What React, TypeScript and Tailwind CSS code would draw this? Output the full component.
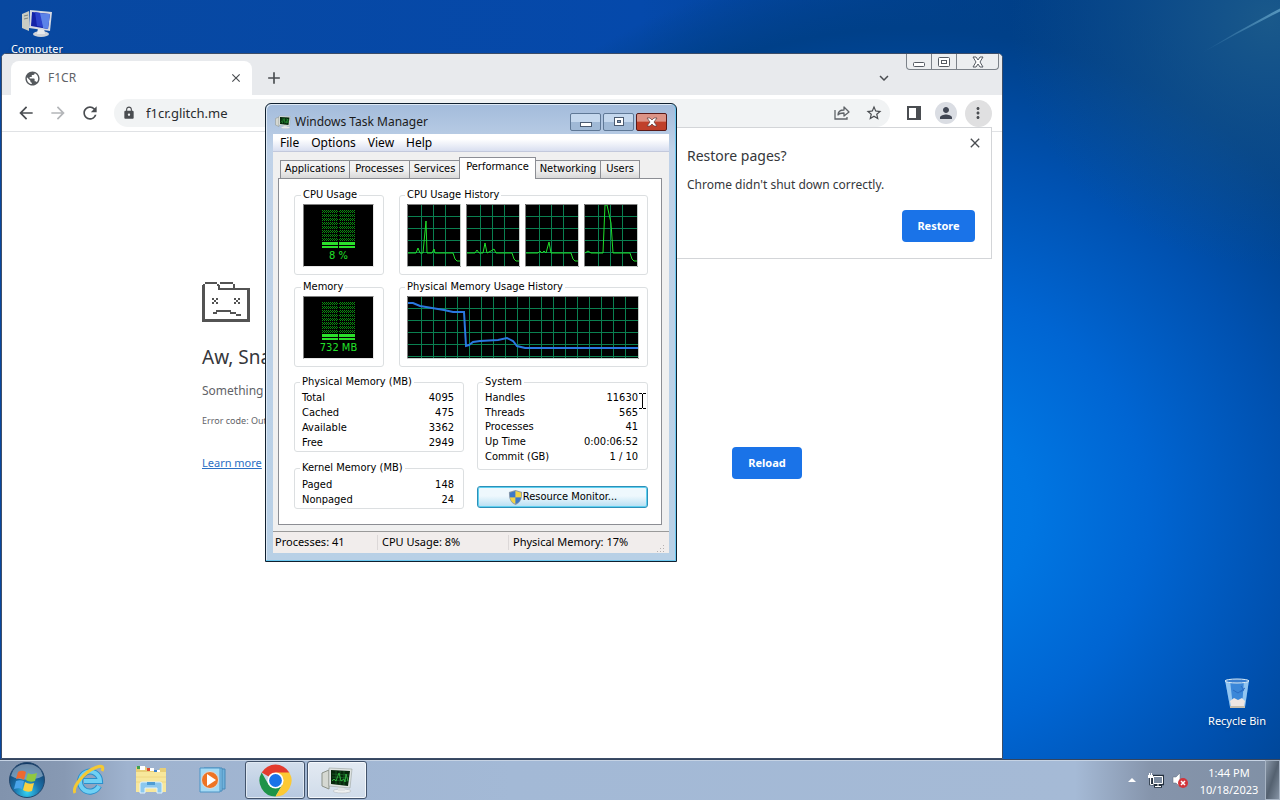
import React from "react";
import {
	MdAdd,
	MdArrowBack,
	MdArrowForward,
	MdClose,
	MdExpandMore,
	MdLock,
	MdMoreVert,
	MdPerson,
	MdPublic,
	MdRefresh,
	MdStarBorder,
} from "react-icons/md";

interface IRow {
	label: string;
	value: string;
}

const physicalMemory: IRow[] = [
	{ label: "Total", value: "4095" },
	{ label: "Cached", value: "475" },
	{ label: "Available", value: "3362" },
	{ label: "Free", value: "2949" },
];

const kernelMemory: IRow[] = [
	{ label: "Paged", value: "148" },
	{ label: "Nonpaged", value: "24" },
];

const system: IRow[] = [
	{ label: "Handles", value: "11630" },
	{ label: "Threads", value: "565" },
	{ label: "Processes", value: "41" },
	{ label: "Up Time", value: "0:00:06:52" },
	{ label: "Commit (GB)", value: "1 / 10" },
];

const tabs = [
	{ name: "Applications", width: "w-[70px]" },
	{ name: "Processes", width: "w-[61px]" },
	{ name: "Services", width: "w-[51px]" },
	{ name: "Performance", width: "w-[77px]" },
	{ name: "Networking", width: "w-[66px]" },
	{ name: "Users", width: "w-[40px]" },
];

// one polyline per core
const cores = [
	"1,49 9,49 11,44 13,49 16,49 19,17 20,49 25,49 27,45 28,49 46,49 48,55 50,57 53,57",
	"1,49 9,49 11,46 13,49 17,49 19,39 21,49 25,47 28,45 30,49 46,49 48,55 50,57 53,57",
	"1,49 13,49 15,47 17,49 19,47 21,49 24,38 26,49 46,49 48,55 50,57 53,57",
	"1,49 4,47 7,49 19,49 21,1 23,1 27,19 29,49 46,49 48,55 50,57 53,57",
];

const memoryLine =
	"1,7 6,7 13,10 25,12 37,14 46,16 57,16 59,50 62,49 66,46 73,45 91,44 100,42 106,45 110,50 118,52 231,52";

/* ---------- desktop ---------- */

const Wallpaper = () => (
	<svg
		aria-hidden="true"
		className="absolute inset-0 h-full w-full"
		viewBox="0 0 1280 800"
		preserveAspectRatio="none">
		<defs>
			<radialGradient id="glow" gradientUnits="userSpaceOnUse" cx="910" cy="540" r="600">
				<stop offset="0" stopColor="#007ee8" />
				<stop offset="0.2" stopColor="#0076e2" />
				<stop offset="0.4" stopColor="#0065d2" />
				<stop offset="0.63" stopColor="#0051b0" />
				<stop offset="0.85" stopColor="#004089" />
				<stop offset="0.97" stopColor="#003f86" stopOpacity="0" />
			</radialGradient>
			<radialGradient id="haze" gradientUnits="userSpaceOnUse" cx="1270" cy="20" r="260">
				<stop offset="0" stopColor="#2b6a8c" stopOpacity="0.6" />
				<stop offset="1" stopColor="#1d5a8c" stopOpacity="0" />
			</radialGradient>
			<linearGradient id="top" x1="0" x2="1" y1="0" y2="0">
				<stop offset="0" stopColor="#0848a0" />
				<stop offset="0.5" stopColor="#0549ab" />
				<stop offset="0.8" stopColor="#003f88" />
				<stop offset="1" stopColor="#003f88" />
			</linearGradient>
			<linearGradient id="ray" x1="0" x2="1" y1="1" y2="0">
				<stop offset="0" stopColor="#7fc0e0" stopOpacity="0" />
				<stop offset="1" stopColor="#7fc0e0" stopOpacity="0.6" />
			</linearGradient>
		</defs>
		<rect width="1280" height="800" fill="url(#top)" />
		<rect width="1280" height="800" fill="url(#glow)" />
		<rect width="1280" height="800" fill="url(#haze)" />
		<path d="M1200 57Q1240 31 1280 9V12Q1240 33 1200 57Z" fill="url(#ray)" />
	</svg>
);

const ComputerIcon = () => (
	<svg className="h-8 w-8" viewBox="0 0 32 32">
		<path d="M1 7l7-3v20l-7-3z" fill="#c9cdc4" />
		<path d="M3 9l4-1M3 12l4-1" stroke="#7e857e" />
		<ellipse cx="20" cy="27" rx="8" ry="3" fill="#cfd3d8" />
		<path d="M17 21h6l1 6h-8z" fill="#e8eaec" />
		<path d="M9 3l22 2-2 19-21-3z" fill="#d5d9e2" />
		<path d="M11 5l18 2-2 15-17-3z" fill="#1322a8" />
		<path d="M18 6l11 1-2 15-5-1z" fill="#5c83e8" />
		<path d="M14 5l5 1 3 14-6-1z" fill="#2c42cc" />
	</svg>
);

const RecycleBinIcon = () => (
	<svg className="h-8 w-8" viewBox="0 0 32 32">
		<path d="M4 3h24l-4 27H9z" fill="#4f9ae6" fillOpacity="0.75" />
		<path d="M4 3l5 27h3L9 3zM28 3l-4 27h-3l2-27z" fill="#a9d4f6" fillOpacity="0.8" />
		<path d="M9 24l4-3 4 2 4-2 3 3-1 5H10z" fill="#eee6e2" />
		<path d="M12 13l5 3 7-5M20 9l3 4-4 2" fill="none" stroke="#2a6cc4" />
		<ellipse cx="16" cy="4" rx="12" ry="2" fill="#3a7fd0" stroke="#dcecf4" />
		<path d="M9 30h15" stroke="#c8bfae" strokeWidth="2" />
	</svg>
);

/* ---------- browser ---------- */

const SadFolder = () => (
	<svg className="h-10 w-12" viewBox="0 0 48 40" fill="#535353" shapeRendering="crispEdges">
		<path d="M0 3h3v37H0zM3 0h12v2H3zM1 2h2v2H1zM15 2h2v2h-2zM18 0h13v2H18zM16 3h2v5h-2zM31 2h2v4h-2zM16 6h32v2H16zM45 6h3v34h-3zM0 37h48v3H0z" />
		<path d="M10 16h2v2h-2zM14 16h2v2h-2zM12 18h2v2h-2zM10 20h2v2h-2zM14 20h2v2h-2zM32 16h2v2h-2zM36 16h2v2h-2zM34 18h2v2h-2zM32 20h2v2h-2zM36 20h2v2h-2z" />
		<path d="M11 30h4v2h-4zM14 28h15v2H14zM28 30h6v2h-6zM34 32h5v2h-5z" />
	</svg>
);

const ShareIcon = () => (
	<svg className="h-4 w-4" viewBox="0 0 16 16" fill="none" stroke="#5f6368" strokeWidth="1.3">
		<path d="M1 5v9h12v-2" />
		<path d="M4 10c0-3 2-5 6-5V2l5 5-5 4V8C7 8 5 8 4 10z" strokeLinejoin="round" />
	</svg>
);

const BrowserWindow: React.FC = () => (
	<section
		aria-label="F1CR - Google Chrome"
		className="absolute top-[53px] right-[277px] bottom-0 left-px flex flex-col overflow-hidden rounded-t-[5px] border border-[#3c4d68] bg-white">
		<div className="relative flex h-[41px] shrink-0 items-end bg-[#e8eaed] pl-[9px]">
			<div className="flex h-[34px] w-[241px] items-center rounded-t-lg bg-white pr-[9px] pl-[13px]">
				<MdPublic className="size-[17px] text-[#55595d]" />
				<span className="ml-[7px] flex-1 text-xs text-[#5f6368]">F1CR</span>
				<button aria-label="Close tab" className="text-[#4a4d51]">
					<MdClose className="size-[14px]" />
				</button>
			</div>
			<button aria-label="New tab" className="flex h-[34px] w-11 items-center justify-center text-[#4a4d51]">
				<MdAdd className="size-5" />
			</button>
			<button
				aria-label="Search tabs"
				className="mr-[109px] ml-auto flex h-[34px] items-center text-[#4a4d51]">
				<MdExpandMore className="size-[18px]" />
			</button>
			<div className="absolute top-0 right-[3px] flex h-4 overflow-hidden rounded-b border border-t-0 border-[#7c8289] bg-[#eceef0]">
				<button aria-label="Minimize" className="flex w-[25px] items-center justify-center border-r border-[#7c8289]">
					<svg className="h-3 w-3" viewBox="0 0 12 12">
						<rect x="0.5" y="6.5" width="11" height="4" rx="1" fill="#fff" stroke="#555b62" />
					</svg>
				</button>
				<button aria-label="Maximize" className="flex w-[25px] items-center justify-center border-r border-[#7c8289]">
					<svg className="h-3 w-3" viewBox="0 0 12 12" fill="#fff" stroke="#555b62">
						<rect x="0.5" y="1.5" width="11" height="9" rx="1" />
						<rect x="3.5" y="4.5" width="5" height="3" />
					</svg>
				</button>
				<button aria-label="Close" className="flex w-[41px] items-center justify-center">
					<svg className="h-3 w-3" viewBox="0 0 12 12">
						<path d="M1 1h3l2 3 2-3h3L8 6l3 5H8L6 8l-2 3H1l3-5z" fill="#fff" stroke="#555b62" />
					</svg>
				</button>
			</div>
		</div>

		<div className="flex h-[37px] shrink-0 items-center border-b border-[#e0e2e5] px-2 text-[#4a4d51]">
			<button aria-label="Back" className="flex w-8 justify-center">
				<MdArrowBack className="size-5" />
			</button>
			<button aria-label="Forward" className="flex w-8 justify-center text-[#b4b6b9]">
				<MdArrowForward className="size-5" />
			</button>
			<button aria-label="Reload page" className="flex w-8 justify-center">
				<MdRefresh className="size-5" />
			</button>
			<div className="mx-2 flex h-7 flex-1 items-center rounded-full bg-[#f1f3f4] pl-2">
				<MdLock className="size-[14px] shrink-0" />
				<input
					aria-label="Address"
					defaultValue="f1cr.glitch.me"
					className="ml-[10px] min-w-0 flex-1 bg-transparent pt-[2px] text-[13px] text-[#2a2c2f] outline-none"
				/>
				<button aria-label="Share" className="flex w-8 justify-center">
					<ShareIcon />
				</button>
				<button aria-label="Bookmark this tab" className="flex w-8 justify-center">
					<MdStarBorder className="size-[18px]" />
				</button>
			</div>
			<button aria-label="Side panel" className="flex w-8 justify-center">
				<svg className="h-[14px] w-[14px]" viewBox="0 0 14 14">
					<path d="M0 0h14v14H0zM2 2v10h7V2z" fill="#4a4d51" fillRule="evenodd" />
				</svg>
			</button>
			<button aria-label="Profile" className="flex w-8 justify-center">
				<span className="flex size-[22px] items-center justify-center rounded-full bg-[#dadde3]">
					<MdPerson className="size-[18px] text-[#414754]" />
				</span>
			</button>
			<button aria-label="Menu" className="flex w-8 justify-center">
				<span className="flex size-[27px] shrink-0 items-center justify-center rounded-full bg-[#e0e0e1]">
					<MdMoreVert className="size-[18px]" />
				</span>
			</button>
		</div>

		<main className="mx-auto w-full max-w-[600px] pt-[150px]">
			<SadFolder />
			<h1 className="mt-[23px] text-[19px] leading-6 text-[#35373b]">Aw, Snap!</h1>
			<p className="mt-3 text-xs leading-5 text-[#5f6368]">
				Something went wrong while displaying this webpage.
			</p>
			<p className="mt-3 text-[9px] leading-4 text-[#5f6368]">Error code: Out of Memory</p>
			<div className="mt-[18px] flex items-center justify-between">
				<a href="#learn-more" className="text-[11px] text-[#2b6fc4] underline">
					Learn more
				</a>
				<button className="h-8 w-[70px] rounded bg-[#1a73e8] text-[11px] font-bold text-white">
					Reload
				</button>
			</div>
		</main>

		<div
			role="dialog"
			aria-label="Restore pages?"
			className="absolute top-[73px] right-[10px] flex h-[132px] w-[322px] flex-col border border-[#d3d5d8] bg-white px-4 pt-[18px] pb-4 text-[#35373b]">
			<button aria-label="Dismiss" className="absolute top-[7px] right-2 text-[#4a4d51]">
				<MdClose className="size-4" />
			</button>
			<h2 className="text-sm leading-5">Restore pages?</h2>
			<p className="mt-[9px] text-xs leading-5">Chrome didn't shut down correctly.</p>
			<button className="mt-auto h-8 w-[73px] self-end rounded bg-[#1a73e8] text-[11px] font-bold text-white">
				Restore
			</button>
		</div>
	</section>
);

/* ---------- task manager ---------- */

const TaskManagerIcon: React.FC<{ className: string }> = ({ className }) => (
	<svg className={className} viewBox="0 0 32 28">
		<path d="M1 7l7-3v19l-7-3z" fill="#d5d8d2" stroke="#8b9188" />
		<ellipse cx="21" cy="25" rx="9" ry="2" fill="#eef0f0" stroke="#aab0b4" strokeWidth="0.5" />
		<path d="M17 20h6l1 5h-7z" fill="#dfe2e4" />
		<path d="M8 2l23 1-2 19-21-2z" fill="#dfe4e2" stroke="#8e9693" strokeWidth="0.5" />
		<path d="M10 4l19 1-2 15-17-2z" fill="#06260b" />
		<path d="M11 8l17 1M11 11l17 1M11 14l16 1M15 5v13M19 5v14M23 5v14" stroke="#1a6a28" strokeWidth="0.7" />
		<path d="M11 15l2-2 2 2 3-8 2 8 3-2 1 3 1-8 2 7" fill="none" stroke="#35b844" strokeWidth="0.9" />
	</svg>
);

const ShieldIcon = () => (
	<svg className="h-[15px] w-[15px] shrink-0" viewBox="0 0 16 16">
		<path d="M8 0l7 2c0 7-1 11-7 14C2 13 1 9 1 2z" fill="#8c9aa8" />
		<path d="M8 1v7H2V3z" fill="#3c78c8" />
		<path d="M8 1l6 2v5H8z" fill="#f2d444" />
		<path d="M2 8h6v7C4 13 3 11 2 8z" fill="#f2d444" />
		<path d="M14 8H8v7c4-2 5-4 6-7z" fill="#3c78c8" />
	</svg>
);

interface IGroup {
	title: string;
	className: string;
	children: React.ReactNode;
}

const Group: React.FC<IGroup> = ({ title, className, children }) => (
	<fieldset className={`min-w-0 rounded-[3px] border border-[#dcdfe1] ${className}`}>
		<legend className="-ml-[2px] px-[2px] leading-[14px] whitespace-nowrap">{title}</legend>
		{children}
	</fieldset>
);

const Meter: React.FC<{ id: string; value: string }> = ({ id, value }) => (
	<div className="flex h-[63px] w-[71px] flex-col items-center border border-[#e6e6e6] border-t-[#808080] border-l-[#808080] bg-black pt-[5px] text-[#22e02a]">
		<svg className="h-[38px] w-[34px]" viewBox="0 0 34 38" shapeRendering="crispEdges">
			<defs>
				<pattern id={id} width="2" height="4" patternUnits="userSpaceOnUse">
					<path d="M0 0h1v1H0zM1 1h1v1H1zM0 2h1v1H0z" fill="#0a8a10" />
				</pattern>
			</defs>
			<path d="M0 0h16v31H0zM17 0h16v31H17z" fill={`url(#${id})`} />
			<path d="M0 32h16v3H0zM17 32h16v3H17zM0 36h16v2H0zM17 36h16v2H17z" fill="#2be02b" />
		</svg>
		<span className="mt-[1px] leading-[14px]">{value}</span>
	</div>
);

interface IGraph {
	width: number;
	points: string;
	memory?: boolean;
}

const Graph: React.FC<IGraph> = ({ width, points, memory }) => {
	const columns: number[] = [];
	for (let x = 14; x < width - 4; x += 12) columns.push(x);

	return (
		<svg
			className={memory ? "h-[63px] w-[232px]" : "h-[63px] w-[54px]"}
			viewBox={`0 0 ${width} 63`}>
			<rect width={width} height="63" fill="#000" />
			<g stroke="#0a8050" shapeRendering="crispEdges">
				{columns.map((x) => (
					<path key={x} d={`M${x + 0.5} 0V62`} />
				))}
				<path d={`M0 12.5H${width}M0 24.5H${width}M0 36.5H${width}M0 48.5H${width}`} />
				{memory && <path d={`M0 60.5H${width}`} />}
			</g>
			<polyline
				points={points}
				fill="none"
				stroke={memory ? "#2a78e0" : "#1fe02a"}
				strokeWidth={memory ? 2 : 1}
			/>
			<path d={`M0.5 63V0.5H${width}`} fill="none" stroke="#808080" />
			<path d={`M0 62.5H${width - 0.5}V0`} fill="none" stroke="#c4ccc8" />
		</svg>
	);
};

const Stats: React.FC<{ rows: IRow[]; className: string }> = ({ rows, className }) => (
	<table className={`w-full border-collapse leading-[14px] ${className}`}>
		<tbody>
			{rows.map((row) => (
				<tr key={row.label}>
					<th scope="row" className="p-0 text-left font-normal">
						{row.label}
					</th>
					<td className="p-0 text-right">{row.value}</td>
				</tr>
			))}
		</tbody>
	</table>
);

const TaskManager: React.FC = () => (
	<section
		aria-label="Windows Task Manager"
		className="absolute top-[103px] left-[265px] flex w-[412px] flex-col rounded-t-[6px] border border-[#10202f] bg-linear-to-b from-[#a3bbdb] via-[#c0d2e8] via-10% to-[#b8d0e6] px-[7px] pb-2 text-xs text-black shadow-[inset_-1px_0_0_#6cc8f0,inset_0_-1px_0_#6cc8f0,inset_1px_1px_0_#dfeaf6]">
		<header className="flex h-[30px] items-center pt-[6px] pr-[2px] pl-[2px]">
			<TaskManagerIcon className="h-[14px] w-4" />
			<h2 className="ml-1 flex-1 text-[#1a1a1a]">Windows Task Manager</h2>
			<div className="flex gap-[2px]">
				<button
					aria-label="Minimize"
					className="flex h-[18px] w-[31px] items-center justify-center rounded-[2px] border border-[#5f7896] bg-linear-to-b from-[#c5d8ee] from-50% to-[#a0b9d6] to-50%">
					<svg className="h-3 w-3" viewBox="0 0 12 12">
						<rect x="0.5" y="6.5" width="11" height="4" fill="#fff" stroke="#4a5a70" />
					</svg>
				</button>
				<button
					aria-label="Maximize"
					className="flex h-[18px] w-[31px] items-center justify-center rounded-[2px] border border-[#5f7896] bg-linear-to-b from-[#c5d8ee] from-50% to-[#a0b9d6] to-50%">
					<svg className="h-3 w-3" viewBox="0 0 12 12" fill="#fff" stroke="#4a5a70">
						<rect x="1.5" y="1.5" width="9" height="8" />
						<rect x="4.5" y="4.5" width="3" height="2" fill="#8aa4c4" />
					</svg>
				</button>
				<button
					aria-label="Close"
					className="flex h-[18px] w-[31px] items-center justify-center rounded-[2px] border border-[#5a1a18] bg-linear-to-b from-[#dd9487] from-45% to-[#c0402a] to-50%">
					<svg className="h-3 w-3" viewBox="0 0 12 12">
						<path d="M1 2h3l2 2 2-2h3L8 6l3 4H8L6 8l-2 2H1l3-4z" fill="#fff" stroke="#5c3a3a" strokeWidth="0.7" />
					</svg>
				</button>
			</div>
		</header>

		<div className="flex flex-col bg-[#f0f0f0]">
			<nav className="flex h-[18px] items-center gap-3 border-b border-[#c3c9dc] bg-linear-to-b from-white from-30% to-[#d9dff0] px-[7px]">
				<button>File</button>
				<button>Options</button>
				<button>View</button>
				<button>Help</button>
			</nav>

			<div className="pt-[5px] pr-[7px] pb-[6px] pl-[5px] font-['DejaVu_Sans_Condensed','Noto_Sans',sans-serif] text-[11px]">
				<div role="tablist" className="flex h-[21px] items-end pl-[2px]">
					{tabs.map(({ name, width }) =>
						name === "Performance" ? (
							<button
								key={name}
								role="tab"
								aria-selected="true"
								className={`relative -mb-px h-[22px] ${width} -mr-px border border-b-0 border-[#8c8e94] bg-white pb-[2px]`}>
								{name}
							</button>
						) : (
							<button
								key={name}
								role="tab"
								aria-selected="false"
								className={`h-[18px] ${width} -mr-px border border-b-0 border-[#8c8e94] bg-linear-to-b from-[#f2f2f2] from-50% to-[#d8d8d8]`}>
								{name}
							</button>
						)
					)}
				</div>

				<div
					role="tabpanel"
					className="flex h-[347px] flex-col border border-[#8c8e94] bg-white pt-[9px] pr-[13px] pl-[15px]">
					<div className="flex gap-[15px]">
						<Group title="CPU Usage" className="h-[87px] w-[90px] px-2 pt-[2px]">
							<Meter id="cpu-dots" value="8 %" />
						</Group>
						<Group title="CPU Usage History" className="h-[87px] flex-1 px-[7px] pt-[2px]">
							<div className="flex gap-[5px]">
								{cores.map((points) => (
									<Graph key={points} width={54} points={points} />
								))}
							</div>
						</Group>
					</div>
					<div className="mt-[5px] flex gap-[15px]">
						<Group title="Memory" className="h-[87px] w-[90px] px-2 pt-[2px]">
							<Meter id="memory-dots" value="732 MB" />
						</Group>
						<Group title="Physical Memory Usage History" className="h-[87px] flex-1 px-[7px] pt-[2px]">
							<Graph width={232} points={memoryLine} memory />
						</Group>
					</div>
					<div className="mt-2 flex gap-[13px]">
						<div className="flex w-[170px] flex-col gap-[9px]">
							<Group title="Physical Memory (MB)" className="h-[77px] pt-[2px] pr-[9px] pl-[7px]">
								<Stats rows={physicalMemory} className="h-[59px]" />
							</Group>
							<Group title="Kernel Memory (MB)" className="h-[48px] pt-[2px] pr-[9px] pl-[7px]">
								<Stats rows={kernelMemory} className="h-[30px]" />
							</Group>
						</div>
						<div className="flex flex-1 flex-col gap-[16px]">
							<Group title="System" className="h-[95px] pt-[2px] pr-[9px] pl-[7px]">
								<Stats rows={system} className="h-[73px]" />
							</Group>
							<button className="flex h-[22px] items-center justify-center rounded-[3px] border border-[#2c8fb8] bg-linear-to-b from-[#eef8fd] from-45% to-[#b5def2] shadow-[inset_0_0_0_1px_#5fd0f0]">
								<ShieldIcon />
								Resource Monitor...
							</button>
						</div>
					</div>
				</div>
			</div>

			<footer className="flex h-[22px] items-center border-t border-[#9a9a9a] bg-[#f1edec] text-[11px]">
				<span className="w-[104px] pl-[2px]">Processes: 41</span>
				<span className="w-[131px] border-l border-[#dcd8d8] pl-1">CPU Usage: 8%</span>
				<span className="flex-1 border-l border-[#dcd8d8] pl-1">Physical Memory: 17%</span>
				<svg className="mr-1 h-2 w-2 self-end" viewBox="0 0 8 8" fill="#b5b0b0">
					<path d="M6 0h1v1H6zM3 3h1v1H3zM6 3h1v1H6zM0 6h1v1H0zM3 6h1v1H3zM6 6h1v1H6z" />
				</svg>
			</footer>
		</div>
	</section>
);

/* ---------- taskbar ---------- */

const StartOrb = () => (
	<svg className="h-[38px] w-[38px]" viewBox="0 0 38 38">
		<defs>
			<radialGradient id="orb" cx="0.5" cy="0.85" r="0.8">
				<stop offset="0" stopColor="#35d2f2" />
				<stop offset="0.45" stopColor="#1b73ac" />
				<stop offset="1" stopColor="#123a66" />
			</radialGradient>
		</defs>
		<circle cx="19" cy="19" r="17.5" fill="url(#orb)" stroke="#24486e" />
		<path d="M3 15C5 6 12 3 19 3s14 3 16 12c-9 5-23 5-32 0z" fill="#c7d8e6" fillOpacity="0.5" />
		<path d="M10 11c3-2 6-1 8 0l-2 8c-3-2-5-2-8-1z" fill="#ee6a30" />
		<path d="M20 12c3 2 6 1 9 0l-2 8c-3 1-6 1-9-1z" fill="#90c840" />
		<path d="M8 20c3-1 5-1 8 0l-2 8c-2-1-5-1-8 0z" fill="#4aa4ea" />
		<path d="M17 21c3 2 6 2 9 1l-2 8c-3 1-6 1-9-1z" fill="#fbd040" />
	</svg>
);

const ExplorerIcon = () => (
	<svg className="h-[30px] w-8" viewBox="0 0 32 30">
		<path d="M1 2h10l2 3h11l1-2h6v24H1z" fill="#e8cf78" />
		<path d="M5 1h5v4H5zM14 3h5v3h-5zM20 5h5v3h-5z" fill="#fff" />
		<path d="M2 1h3v3H2z" fill="#3fa050" />
		<path d="M12 3h3v3h-3z" fill="#e04a30" />
		<path d="M19 5h3v3h-3z" fill="#3f80c8" />
		<path d="M1 7h30v20H1z" fill="#f7e79c" />
		<path d="M1 12h30M1 17h30" stroke="#eed684" />
		<path d="M5 28v-9q0-2 2-2h18q2 0 2 2v9h-5v-5H10v5z" fill="#8cc8ee" stroke="#e2f3fc" />
		<path d="M12 17h8v3h-8z" fill="#4e9cd4" />
	</svg>
);

const ChromeIcon = () => (
	<svg className="h-[33px] w-[33px]" viewBox="0 0 32 32">
		<path d="M16 16L2.6 8.2A15.5 15.5 0 0 1 29.4 8.2z" fill="#e33b2e" />
		<path d="M2.6 8.2L9.2 19.9 16 16l6.8 3.9L16 31.5A15.5 15.5 0 0 1 2.6 8.2z" fill="#1e9348" />
		<path d="M16 8.2h13.4A15.5 15.5 0 0 1 16 31.5l6.8-11.6z" fill="#fcc934" />
		<circle cx="16" cy="16" r="7.8" fill="#fff" />
		<circle cx="16" cy="16" r="6.2" fill="#1a73e8" />
	</svg>
);

const Taskbar: React.FC = () => (
	<footer className="relative flex h-[41px] shrink-0 items-stretch border-t border-[#35455e] bg-[linear-gradient(90deg,#8193ad_0%,#8799b3_5%,#9fb3cf_10%,#a3b9d6_40%,#a5bad6_84%,#8594ab_90%,#8090a5_100%)] shadow-[inset_0_1px_0_#c6d3e4]">
		<button aria-label="Start" className="mr-[5px] flex w-[54px] items-center justify-center">
			<StartOrb />
		</button>
		<div className="flex gap-[2px] py-px">
			<button aria-label="Internet Explorer" className="flex w-[60px] items-center justify-center">
				<svg className="h-8 w-8" viewBox="0 0 32 32" fill="none">
					<path d="M26 22A10 10 0 1 1 27 17H11" stroke="#2a90cc" strokeWidth="6" />
					<path d="M26 22A10 10 0 1 1 27 17H11" stroke="#6fd0f4" strokeWidth="4" />
					<path d="M2 29C-1 24 10 8 24 3c5-2 7 0 5 4" stroke="#f4c934" strokeWidth="3" />
				</svg>
			</button>
			<button aria-label="Windows Explorer" className="flex w-[60px] items-center justify-center">
				<ExplorerIcon />
			</button>
			<button aria-label="Windows Media Player" className="flex w-[60px] items-center justify-center">
				<svg className="h-7 w-7" viewBox="0 0 28 28">
					<path d="M8 3h18v20H8z" fill="#6fb2dc" stroke="#4689b8" />
					<path d="M5 2h18v23H5z" fill="#8ecbee" stroke="#4689b8" />
					<path d="M1 2h20v24H1z" fill="#a5daf4" stroke="#4a94c6" />
					<circle cx="11" cy="14" r="8.5" fill="#ee7424" stroke="#d8dde0" />
					<path d="M8 8l9 6-9 6z" fill="#fff" />
				</svg>
			</button>
			<button
				aria-label="Google Chrome"
				className="flex w-[60px] items-center justify-center rounded-[3px] border border-[#42536b] bg-linear-to-b from-[#d2deec] to-[#b6c8e0] shadow-[inset_0_0_0_1px_#e0e9f3]">
				<ChromeIcon />
			</button>
			<button
				aria-label="Windows Task Manager"
				className="flex w-[60px] items-center justify-center rounded-[3px] border border-[#42536b] bg-linear-to-b from-[#e3eaf2] to-[#d0dcea] shadow-[inset_0_0_0_1px_#f5f8fb]">
				<TaskManagerIcon className="h-7 w-8" />
			</button>
		</div>
		<div className="ml-auto flex items-center">
			<button aria-label="Show hidden icons" className="flex w-4 justify-center">
				<svg className="h-1 w-2" viewBox="0 0 8 4">
					<path d="M0 4l4-4 4 4z" fill="#fff" />
				</svg>
			</button>
			<button aria-label="Network" className="ml-2 flex w-4 justify-center">
				<svg className="h-4 w-4" viewBox="0 0 16 16" fill="none">
					<path d="M5 4h10v8H5zM10 12v3M6 14.5h8" stroke="#24303e" strokeWidth="2.5" />
					<path d="M2.5 4v8h3" stroke="#24303e" strokeWidth="2.5" />
					<path d="M5.5 4.5h9v7h-9z" fill="#7d8ca0" stroke="#fff" />
					<path d="M10 12v2M7 14.5h6" stroke="#fff" />
					<path d="M0 3h5v3H0zM1 1h1v2H1zM3 1h1v2H3z" fill="#fff" />
					<path d="M2.5 6v6.5h3" stroke="#fff" />
				</svg>
			</button>
			<button aria-label="Volume muted" className="ml-2 flex w-4 justify-center">
				<svg className="h-4 w-4" viewBox="0 0 16 16">
					<path d="M1 5h3l4-4v14l-4-4H1z" fill="#fff" stroke="#5d6978" strokeWidth="0.5" />
					<circle cx="11" cy="11" r="5" fill="#d2343a" />
					<path d="M9 9l4 4M13 9l-4 4" stroke="#fff" strokeWidth="1.5" />
				</svg>
			</button>
			<button className="ml-[5px] w-[72px] pt-[2px] text-center text-[11px] leading-[17px] text-white">
				<span className="block">1:44 PM</span>
				<span className="block">10/18/2023</span>
			</button>
			<button
				aria-label="Show desktop"
				className="h-full w-[15px] border border-[#a7b4c4] bg-linear-to-br from-[#8997a8] via-[#546170] to-[#8593a4]"
			/>
		</div>
	</footer>
);

const App: React.FC = () => (
	<div className="flex min-h-screen flex-col overflow-hidden bg-[#00428f] font-['Noto_Sans','Open_Sans',sans-serif]">
		<div className="relative flex-1">
			<Wallpaper />
			<button className="absolute top-[7px] left-0 flex w-[74px] flex-col items-center gap-[2px] text-[11px] text-white text-shadow-md">
				<ComputerIcon />
				Computer
			</button>
			<button className="absolute right-0 bottom-[30px] flex w-[86px] flex-col items-center gap-1 text-[11px] leading-4 text-white text-shadow-md">
				<RecycleBinIcon />
				Recycle Bin
			</button>
			<BrowserWindow />
			<TaskManager />
			<svg
				aria-hidden="true"
				className="absolute top-[393px] left-[638px] h-4 w-[9px]"
				viewBox="0 0 9 16"
				fill="none"
				stroke="#000">
				<path d="M1 0.5h3M5 0.5h3M4.5 1v14M1 15.5h3M5 15.5h3" />
			</svg>
		</div>
		<Taskbar />
	</div>
);

export default App;
